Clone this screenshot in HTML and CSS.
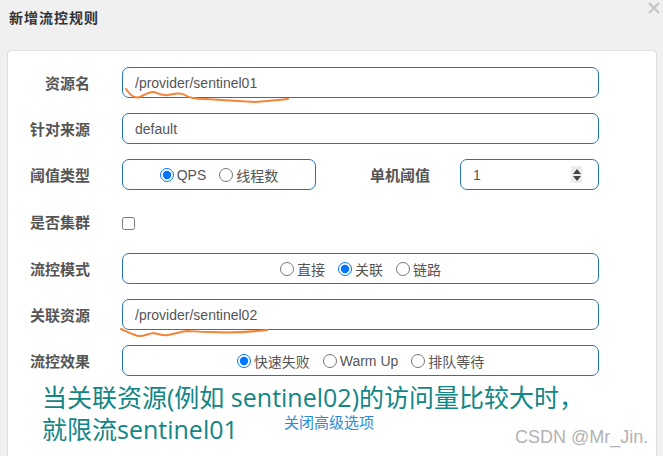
FILE: index.html
```html
<!DOCTYPE html>
<html lang="zh">
<head>
<meta charset="utf-8">
<title>新增流控规则</title>
<link rel="stylesheet" href="styles.css">
</head>
<body>
<div class="modal">
  <div class="header">
    <span class="title">新增流控规则</span>
    <svg class="close" width="14" height="14" viewBox="0 0 14 14"><path d="M2 2 L12 12 M12 2 L2 12"/></svg>
  </div>
  <div class="panel">
    <div class="row">
      <label class="label">资源名</label>
      <div class="field wide"><span class="val">/provider/sentinel01</span></div>
    </div>
    <div class="row">
      <label class="label">针对来源</label>
      <div class="field wide"><span class="val">default</span></div>
    </div>
    <div class="row">
      <label class="label">阈值类型</label>
      <div class="field narrow radios">
        <label class="opt"><input type="radio" name="t" checked>QPS</label>
        <label class="opt"><input type="radio" name="t">线程数</label>
      </div>
      <label class="label2">单机阈值</label>
      <div class="field num"><span class="val">1</span><span class="spin"><i class="up"></i><i class="down"></i></span></div>
    </div>
    <div class="row check-row">
      <label class="label">是否集群</label>
      <input class="chk" type="checkbox">
    </div>
    <div class="row">
      <label class="label">流控模式</label>
      <div class="field wide radios">
        <label class="opt"><input type="radio" name="m">直接</label>
        <label class="opt"><input type="radio" name="m" checked>关联</label>
        <label class="opt"><input type="radio" name="m">链路</label>
      </div>
    </div>
    <div class="row">
      <label class="label">关联资源</label>
      <div class="field wide"><span class="val">/provider/sentinel02</span></div>
    </div>
    <div class="row">
      <label class="label">流控效果</label>
      <div class="field wide radios">
        <label class="opt"><input type="radio" name="e" checked>快速失败</label>
        <label class="opt"><input type="radio" name="e">Warm Up</label>
        <label class="opt"><input type="radio" name="e">排队等待</label>
      </div>
    </div>
    <div class="link-row"><a class="link">关闭高级选项</a></div>
  </div>
  <div class="note">当关联资源(例如 sentinel02)的访问量比较大时，<br>就限流sentinel01</div>
  <div class="mark">CSDN @Mr_Jin.</div>
  <svg class="scribble" width="663" height="456" viewBox="0 0 663 456">
    <path d="M126 89 C130 95 135 99 140 97 C145 95 149 91 154 92 C159 94 163 96 168 95 C174 94 180 92 185 95 C189 98 194 99 205 99 C220 100 240 101 255 102 C270 101 280 100 288 99" />
    <path d="M121 329 C126 331 131 334 138 336 C144 337 149 333 154 333 C159 334 163 336 168 335 C174 334 180 332 187 331 C193 331 198 332 210 332 C230 333 250 332 267 330" />
  </svg>
</div>
</body>
</html>
```
FILE: styles.css
```css
html, body {
  margin: 0;
  padding: 0;
}
body {
  width: 663px;
  height: 456px;
  overflow: hidden;
  background: #f0f0f0;
  font-family: "Liberation Sans", "Noto Sans CJK SC", sans-serif;
  color: #555;
}
.modal {
  position: relative;
  width: 663px;
  height: 456px;
}
.header {
  height: 50px;
  box-sizing: border-box;
  padding: 7px 0 0 9px;
}
.title {
  font-size: 14px;
  font-weight: bold;
  color: #333;
  letter-spacing: 1px;
}
.close {
  position: absolute;
  top: 1px;
  right: 2px;
}
.close path {
  stroke: #c2c2c2;
  stroke-width: 2;
  fill: none;
}
.panel {
  margin-left: 7px;
  width: 650px;
  height: 420px;
  box-sizing: border-box;
  background: #fff;
  border: 1px solid #ddd;
  border-radius: 4px;
  padding-top: 16px;
  display: flex;
  flex-direction: column;
  gap: 15px;
}
.row {
  display: flex;
  align-items: center;
  height: 31px;
}
.check-row {
  height: 33px;
}
.label {
  width: 82px;
  flex: none;
  text-align: right;
  font-size: 15px;
  font-weight: bold;
  color: #555;
  margin-right: 32px;
}
.label2 {
  width: 114px;
  text-align: right;
  font-size: 15px;
  font-weight: bold;
  color: #555;
  margin-right: 30px;
}
.field {
  height: 31px;
  box-sizing: border-box;
  border: 1px solid #2276b2;
  border-radius: 7px;
  display: flex;
  align-items: center;
  font-size: 14px;
}
.wide {
  width: 477px;
}
.narrow {
  width: 194px;
}
.num {
  width: 139px;
  justify-content: space-between;
  padding-right: 16px;
}
.val {
  padding-left: 12px;
  color: #555;
}
.radios {
  justify-content: center;
  gap: 13px;
}
.opt {
  display: inline-flex;
  align-items: center;
  font-size: 14px;
  color: #555;
}
.opt input {
  margin: 0 3px 0 0;
  width: 14px;
  height: 14px;
}
.spin {
  width: 11px;
  height: 17px;
  background: #ececec;
  display: flex;
  flex-direction: column;
  align-items: center;
  justify-content: center;
  gap: 2px;
}
.up {
  width: 0;
  height: 0;
  border-left: 4px solid transparent;
  border-right: 4px solid transparent;
  border-bottom: 5px solid #444;
}
.down {
  width: 0;
  height: 0;
  border-left: 4px solid transparent;
  border-right: 4px solid transparent;
  border-top: 5px solid #444;
}
.chk {
  margin: 4px 0 0 0;
  width: 13px;
  height: 13px;
}
.link-row {
  display: flex;
  justify-content: center;
  margin-top: 20px;
  padding-right: 6px;
}
.link {
  font-size: 15px;
  color: #2a8ad6;
  font-family: "Noto Sans CJK SC", sans-serif;
}
.note {
  position: absolute;
  left: 42px;
  top: 381px;
  font-family: "Open Sans", "Noto Sans CJK SC", sans-serif;
  font-size: 25px;
  line-height: 32px;
  color: #128685;
}
.mark {
  position: absolute;
  left: 515px;
  top: 427px;
  font-size: 18px;
  color: #b3b3b3;
  text-shadow: 0 0 1px #fff;
}
.scribble {
  position: absolute;
  left: 0;
  top: 0;
  pointer-events: none;
}
.scribble path {
  fill: none;
  stroke: #f58438;
  stroke-width: 2;
  stroke-linecap: round;
}
```
